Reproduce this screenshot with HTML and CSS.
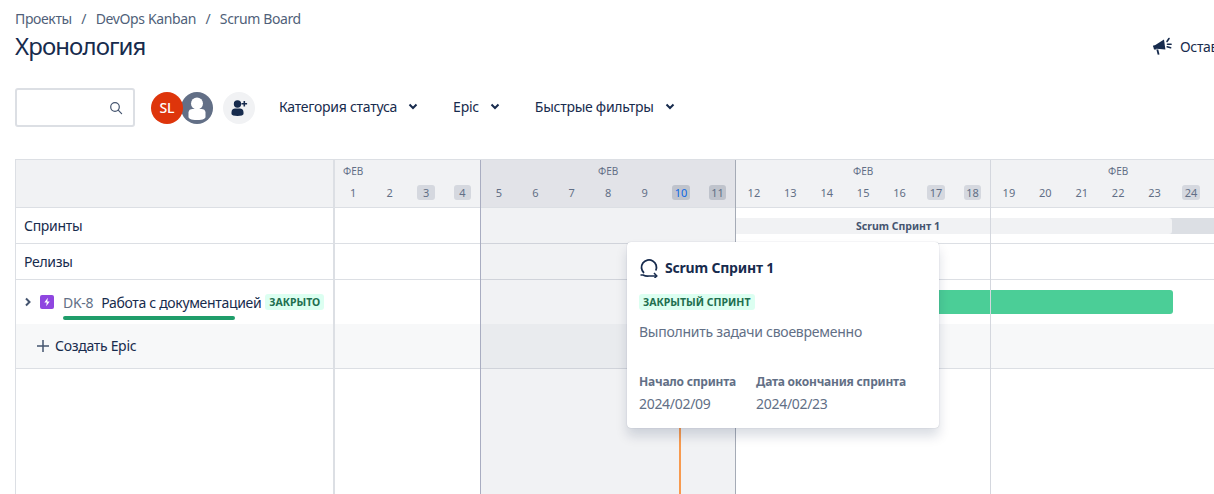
FILE: index.html
```html
<!DOCTYPE html>
<html lang="ru">

<head>
    <meta charset="UTF-8">
    <title>Хронология</title>
    <link rel="stylesheet" href="styles.css">
</head>

<body>
    <nav class="crumbs">
        <span>Проекты</span><span class="sep">/</span><span>DevOps Kanban</span><span class="sep">/</span><span>Scrum Board</span>
    </nav>

    <header class="page-head">
        <h1>Хронология</h1>
        <div class="feedback">
            <svg width="20" height="20" viewBox="0 0 20 20">
                <path d="M1 10.500 12 3.500l1.400 10L4.600 12.800z" fill="#172b4d"/>
                <path d="M1 9.500h3.500v4H2z" fill="#172b4d"/>
                <path d="M5.300 13.500 6.600 18.600" stroke="#172b4d" stroke-width="1.800" fill="none"/>
                <path d="M15 5.500 17 2.500M15.500 8.200h3.600M15.200 10.800l3.400 1" stroke="#172b4d" stroke-width="1.600" stroke-linecap="round" fill="none"/>
            </svg>
            <span>Оставить отзыв</span>
        </div>
    </header>

    <div class="toolbar">
        <div class="search">
            <svg width="14" height="14" viewBox="0 0 14 14" fill="none" stroke="#44546f" stroke-width="1.200">
                <circle cx="6" cy="6" r="4.300"/>
                <path d="M9.200 9.200 12.600 12.600" stroke-linecap="round"/>
            </svg>
        </div>
        <div class="avatars">
            <div class="avatar avatar-red">SL</div>
            <div class="avatar avatar-grey">
                <svg width="32" height="32" viewBox="0 0 32 32">
                    <circle cx="16" cy="11.500" r="6" fill="#fff"/>
                    <path d="M7.500 20.500c0-2.500 2-3.500 4-3.500h9c2 0 4 1 4 3.500V25c0 1.500-2 3-8.500 3s-8.500-1.500-8.500-3z" fill="#fff"/>
                </svg>
            </div>
        </div>
        <div class="avatar avatar-add">
            <svg width="20" height="20" viewBox="0 0 20 20" fill="#172b4d">
                <circle cx="8.500" cy="6" r="3.700"/>
                <path d="M2.500 14c0-2.500 2-3.500 3.500-3.500h5c1.500 0 3.500 1 3.500 3.500v2c0 1-2.500 2-6 2s-6-1-6-2z"/>
                <path d="M14.500 3h1.600v2h2v1.600h-2v2h-1.600v-2h-2V5h2z"/>
            </svg>
        </div>
        <div class="filters">
            <div class="filter">Категория статуса
                <svg class="chev" width="10" height="7" viewBox="0 0 10 7"><path d="M1.500 1.500 5 5l3.500-3.500" fill="none" stroke="#172b4d" stroke-width="2"/></svg>
            </div>
            <div class="filter">Epic
                <svg class="chev" width="10" height="7" viewBox="0 0 10 7"><path d="M1.500 1.500 5 5l3.500-3.500" fill="none" stroke="#172b4d" stroke-width="2"/></svg>
            </div>
            <div class="filter">Быстрые фильтры
                <svg class="chev" width="10" height="7" viewBox="0 0 10 7"><path d="M1.500 1.500 5 5l3.500-3.500" fill="none" stroke="#172b4d" stroke-width="2"/></svg>
            </div>
        </div>
    </div>

    <div class="roadmap">
        <div class="row row-head">
            <div class="cell-left"></div>
            <div class="weeks">
                <div class="week week-first">
                    <div class="month">ФЕВ</div>
                    <div class="days">
                        <span>1</span><span>2</span><span class="off">3</span><span class="off">4</span>
                    </div>
                </div>
                <div class="week week-current">
                    <div class="month">ФЕВ</div>
                    <div class="days">
                        <span>5</span><span>6</span><span>7</span><span>8</span><span>9</span><span class="off today">10</span><span class="off">11</span>
                    </div>
                </div>
                <div class="week">
                    <div class="month">ФЕВ</div>
                    <div class="days">
                        <span>12</span><span>13</span><span>14</span><span>15</span><span>16</span><span class="off">17</span><span class="off">18</span>
                    </div>
                </div>
                <div class="week">
                    <div class="month">ФЕВ</div>
                    <div class="days">
                        <span>19</span><span>20</span><span>21</span><span>22</span><span>23</span><span class="off">24</span>
                    </div>
                </div>
            </div>
        </div>

        <div class="row row-small">
            <div class="cell-left">Спринты</div>
            <div class="track">
                <div class="sprint-bar">
                    <div class="sprint-done">Scrum Спринт 1</div>
                </div>
            </div>
        </div>
        <div class="row row-small">
            <div class="cell-left">Релизы</div>
            <div class="track"></div>
        </div>
        <div class="row row-epic">
            <div class="cell-left">
                <svg class="expand" width="8" height="10" viewBox="0 0 8 10"><path d="M2 1.500 5.500 5 2 8.500" fill="none" stroke="#44546f" stroke-width="2"/></svg>
                <svg class="epic-icon" width="14" height="14" viewBox="0 0 14 14">
                    <rect width="14" height="14" rx="2" fill="#8f46e0"/>
                    <path d="M7.800 2.800 4.300 7.600h2.400l-.5 3.600 3.500-4.800H7.300z" fill="#fff"/>
                </svg>
                <div class="epic-name">
                    <span class="key">DK-8</span>
                    <span class="epic-title">Работа с документацией</span>
                    <div class="progress"></div>
                </div>
                <span class="tag">ЗАКРЫТО</span>
            </div>
            <div class="track">
                <div class="epic-bar"></div>
            </div>
        </div>
        <div class="row row-create">
            <div class="cell-left">
                <svg width="14" height="14" viewBox="0 0 14 14"><path d="M7 1v12M1 7h12" stroke="#44546f" stroke-width="1.500" fill="none"/></svg>
                <span>Создать Epic</span>
            </div>
            <div class="track"></div>
        </div>
        <div class="row row-rest">
            <div class="cell-left"></div>
            <div class="track"></div>
        </div>

        <div class="overlay">
            <div class="shade"></div>
            <div class="grid-line line-a"></div>
            <div class="grid-line line-b"></div>
            <div class="grid-line line-c"></div>
            <div class="today-line"></div>
        </div>

        <div class="popup">
            <div class="popup-title">
                <svg width="20" height="20" viewBox="0 0 20 20" fill="none" stroke="#172b4d" stroke-width="1.800">
                    <path d="M5 15A7.500 7.500 0 1 1 16.800 12.500"/>
                    <path d="M1.500 17H4Q7 18.500 10 18H17.500" stroke-width="1.500"/>
                    <path d="M15 15l2.800 3-2.300 2" stroke-width="1.500"/>
                </svg>
                <span>Scrum Спринт 1</span>
            </div>
            <span class="tag tag-sprint">ЗАКРЫТЫЙ СПРИНТ</span>
            <p class="popup-desc">Выполнить задачи своевременно</p>
            <div class="popup-dates">
                <div>
                    <div class="date-label">Начало спринта</div>
                    <div class="date-value">2024/02/09</div>
                </div>
                <div>
                    <div class="date-label">Дата окончания спринта</div>
                    <div class="date-value">2024/02/23</div>
                </div>
            </div>
        </div>
    </div>
</body>
</html>
```

FILE: styles.css
```css
html, body {
    height: 100%;
}

body {
    margin: 0;
    padding: 0 0 0 15px;
    overflow: hidden;
    font-family: 'Noto Sans', sans-serif;
    font-size: 14px;
    letter-spacing: -0.3px;
    color: #172b4d;
    background-color: #fff;
}

.crumbs {
    display: flex;
    height: 20px;
    padding-top: 9px;
    line-height: 20px;
    font-size: 14px;
    letter-spacing: -0.37px;
    color: #505f79;
}

.sep {
    margin: 0 9.500px;
}

.page-head {
    display: flex;
    justify-content: space-between;
    align-items: center;
    height: 36px;
    margin-top: -1px;
}

h1 {
    margin: 0;
    font-size: 24px;
    font-weight: 400;
    letter-spacing: -0.9px;
    line-height: 36px;
    color: #172b4d;
}

.feedback {
    display: flex;
    align-items: center;
    gap: 8px;
    margin-right: -68px;
    white-space: nowrap;
}

.toolbar {
    display: flex;
    align-items: center;
    margin-top: 24px;
    height: 39px;
}

.search {
    display: flex;
    align-items: center;
    justify-content: flex-end;
    box-sizing: border-box;
    width: 120px;
    height: 39px;
    padding-right: 10px;
    border: 2px solid #dcdfe4;
    border-radius: 3px;
}

.avatars {
    display: flex;
    margin-left: 16px;
}

.avatar {
    display: flex;
    align-items: center;
    justify-content: center;
    width: 32px;
    height: 32px;
    border-radius: 50%;
    overflow: hidden;
}

.avatar-red {
    position: relative;
    z-index: 1;
    background-color: #de350b;
    color: #fff;
    font-size: 14px;
    font-weight: 500;
    letter-spacing: 0;
}

.avatar-grey {
    margin-left: -2px;
    background-color: #626f86;
}

.avatar-add {
    margin-left: 10px;
    background-color: #f1f2f4;
}

.filters {
    display: flex;
    margin-left: 24px;
    padding-bottom: 2px;
    gap: 35px;
    letter-spacing: -0.26px;
}

.filter {
    display: flex;
    align-items: center;
    gap: 11px;
    white-space: nowrap;
}

.roadmap {
    position: relative;
    margin-top: 32px;
    border-top: 1px solid #dcdfe4;
    border-left: 1px solid #dcdfe4;
}

.row {
    display: flex;
    box-sizing: border-box;
    border-bottom: 1px solid #dcdfe4;
}

.cell-left {
    display: flex;
    align-items: center;
    flex-shrink: 0;
    box-sizing: border-box;
    width: 319px;
    padding-left: 8px;
    border-right: 2px solid #dcdfe4;
}

.track {
    position: relative;
    flex: 1;
}

.row-head {
    height: 48px;
    background-color: #f1f2f4;
}

.weeks {
    display: flex;
    flex: 1;
    color: #626f86;
    letter-spacing: 0;
}

.week {
    flex-shrink: 0;
    width: 255px;
    text-align: center;
}

.week-first {
    width: 145.7px;
    text-align: left;
}

.week-current {
    background-color: #e2e3e8;
}

.month {
    height: 12px;
    margin-top: 4px;
    padding: 0 8px;
    font-size: 10px;
    line-height: 14px;
}

.days {
    display: grid;
    grid-template-columns: repeat(7, 36.43px);
    margin-top: 9px;
    font-size: 11px;
    line-height: 15px;
    text-align: center;
}

.days span {
    margin: 0 9.500px;
    border-radius: 3px;
}

.days .off {
    background-color: #d5d8df;
}

.week-current .off {
    background-color: #bfc3cc;
}

.days .today {
    color: #0c66e4;
}

.row-small {
    height: 36px;
}

.row-epic {
    height: 44px;
    border-bottom: none;
}

.epic-icon {
    margin-left: 8px;
}

.epic-name {
    position: relative;
    display: flex;
    gap: 8px;
    margin-left: 9px;
    white-space: nowrap;
}

.epic-title {
    letter-spacing: -0.33px;
}

.key {
    color: #626f86;
}

.progress {
    position: absolute;
    left: 0;
    top: 23px;
    width: 172px;
    height: 4px;
    border-radius: 2px;
    background-color: #1f9d6a;
}

.tag {
    display: inline-block;
    padding: 0 4px;
    border-radius: 3px;
    background-color: #dcfff1;
    color: #216e4e;
    font-size: 10.500px;
    font-weight: 700;
    letter-spacing: 0;
    line-height: 16px;
    white-space: nowrap;
}

.row-epic .tag {
    margin-left: 4px;
}

.row-create {
    height: 45px;
    background-color: #f7f8f9;
}

.row-create .cell-left {
    gap: 5px;
    padding-left: 20px;
    padding-bottom: 1px;
}

.row-rest {
    height: 130px;
}

.sprint-bar {
    position: absolute;
    left: 400px;
    right: 0;
    top: 10px;
    height: 16px;
    background-color: #dcdfe4;
}

.sprint-done {
    box-sizing: border-box;
    width: 437px;
    height: 16px;
    padding-left: 121px;
    border-radius: 0 3px 3px 0;
    background-color: #f1f2f4;
    color: #44546f;
    font-size: 10.500px;
    font-weight: 700;
    letter-spacing: 0;
    line-height: 16px;
}

.epic-bar {
    position: absolute;
    left: 310px;
    top: 10px;
    width: 528px;
    height: 24px;
    border-radius: 3px;
    background-color: #4bce97;
}

.overlay {
    position: absolute;
    left: 319px;
    right: 0;
    top: 48px;
    bottom: 0;
    pointer-events: none;
}

.shade {
    position: absolute;
    left: 145.7px;
    width: 255px;
    top: 0;
    bottom: 0;
    background-color: rgba(9, 30, 66, 0.06);
}

.grid-line {
    position: absolute;
    top: -48px;
    bottom: 0;
    width: 1px;
}

.line-a {
    left: 145px;
    background-color: #a9adc1;
}

.line-b {
    left: 400px;
    background-color: #a5abb6;
}

.line-c {
    left: 655px;
    background-color: #d4d7de;
}

.today-line {
    position: absolute;
    left: 344px;
    top: 72px;
    bottom: 0;
    width: 2px;
    background-color: #f79a4f;
}

.popup {
    position: absolute;
    left: 611px;
    top: 82px;
    box-sizing: border-box;
    width: 312px;
    height: 186px;
    padding: 16px 12px;
    border-radius: 4px;
    background-color: #fff;
    box-shadow: 0 8px 12px rgba(9, 30, 66, 0.15), 0 0 1px rgba(9, 30, 66, 0.31);
}

.popup-title {
    display: flex;
    align-items: center;
    gap: 6px;
    margin-bottom: 13px;
    font-size: 14px;
    font-weight: 700;
    letter-spacing: -0.2px;
    line-height: 20px;
}

.popup-desc {
    margin: 12px 0 0;
    font-size: 14px;
    letter-spacing: -0.25px;
    line-height: 20px;
    color: #626f86;
}

.popup-dates {
    display: flex;
    gap: 20px;
    margin-top: 32px;
}

.date-label {
    font-size: 12px;
    font-weight: 700;
    letter-spacing: -0.22px;
    line-height: 16px;
    color: #626f86;
}

.date-value {
    margin-top: 4px;
    font-size: 14px;
    letter-spacing: -0.3px;
    line-height: 20px;
    color: #626f86;
}
```
